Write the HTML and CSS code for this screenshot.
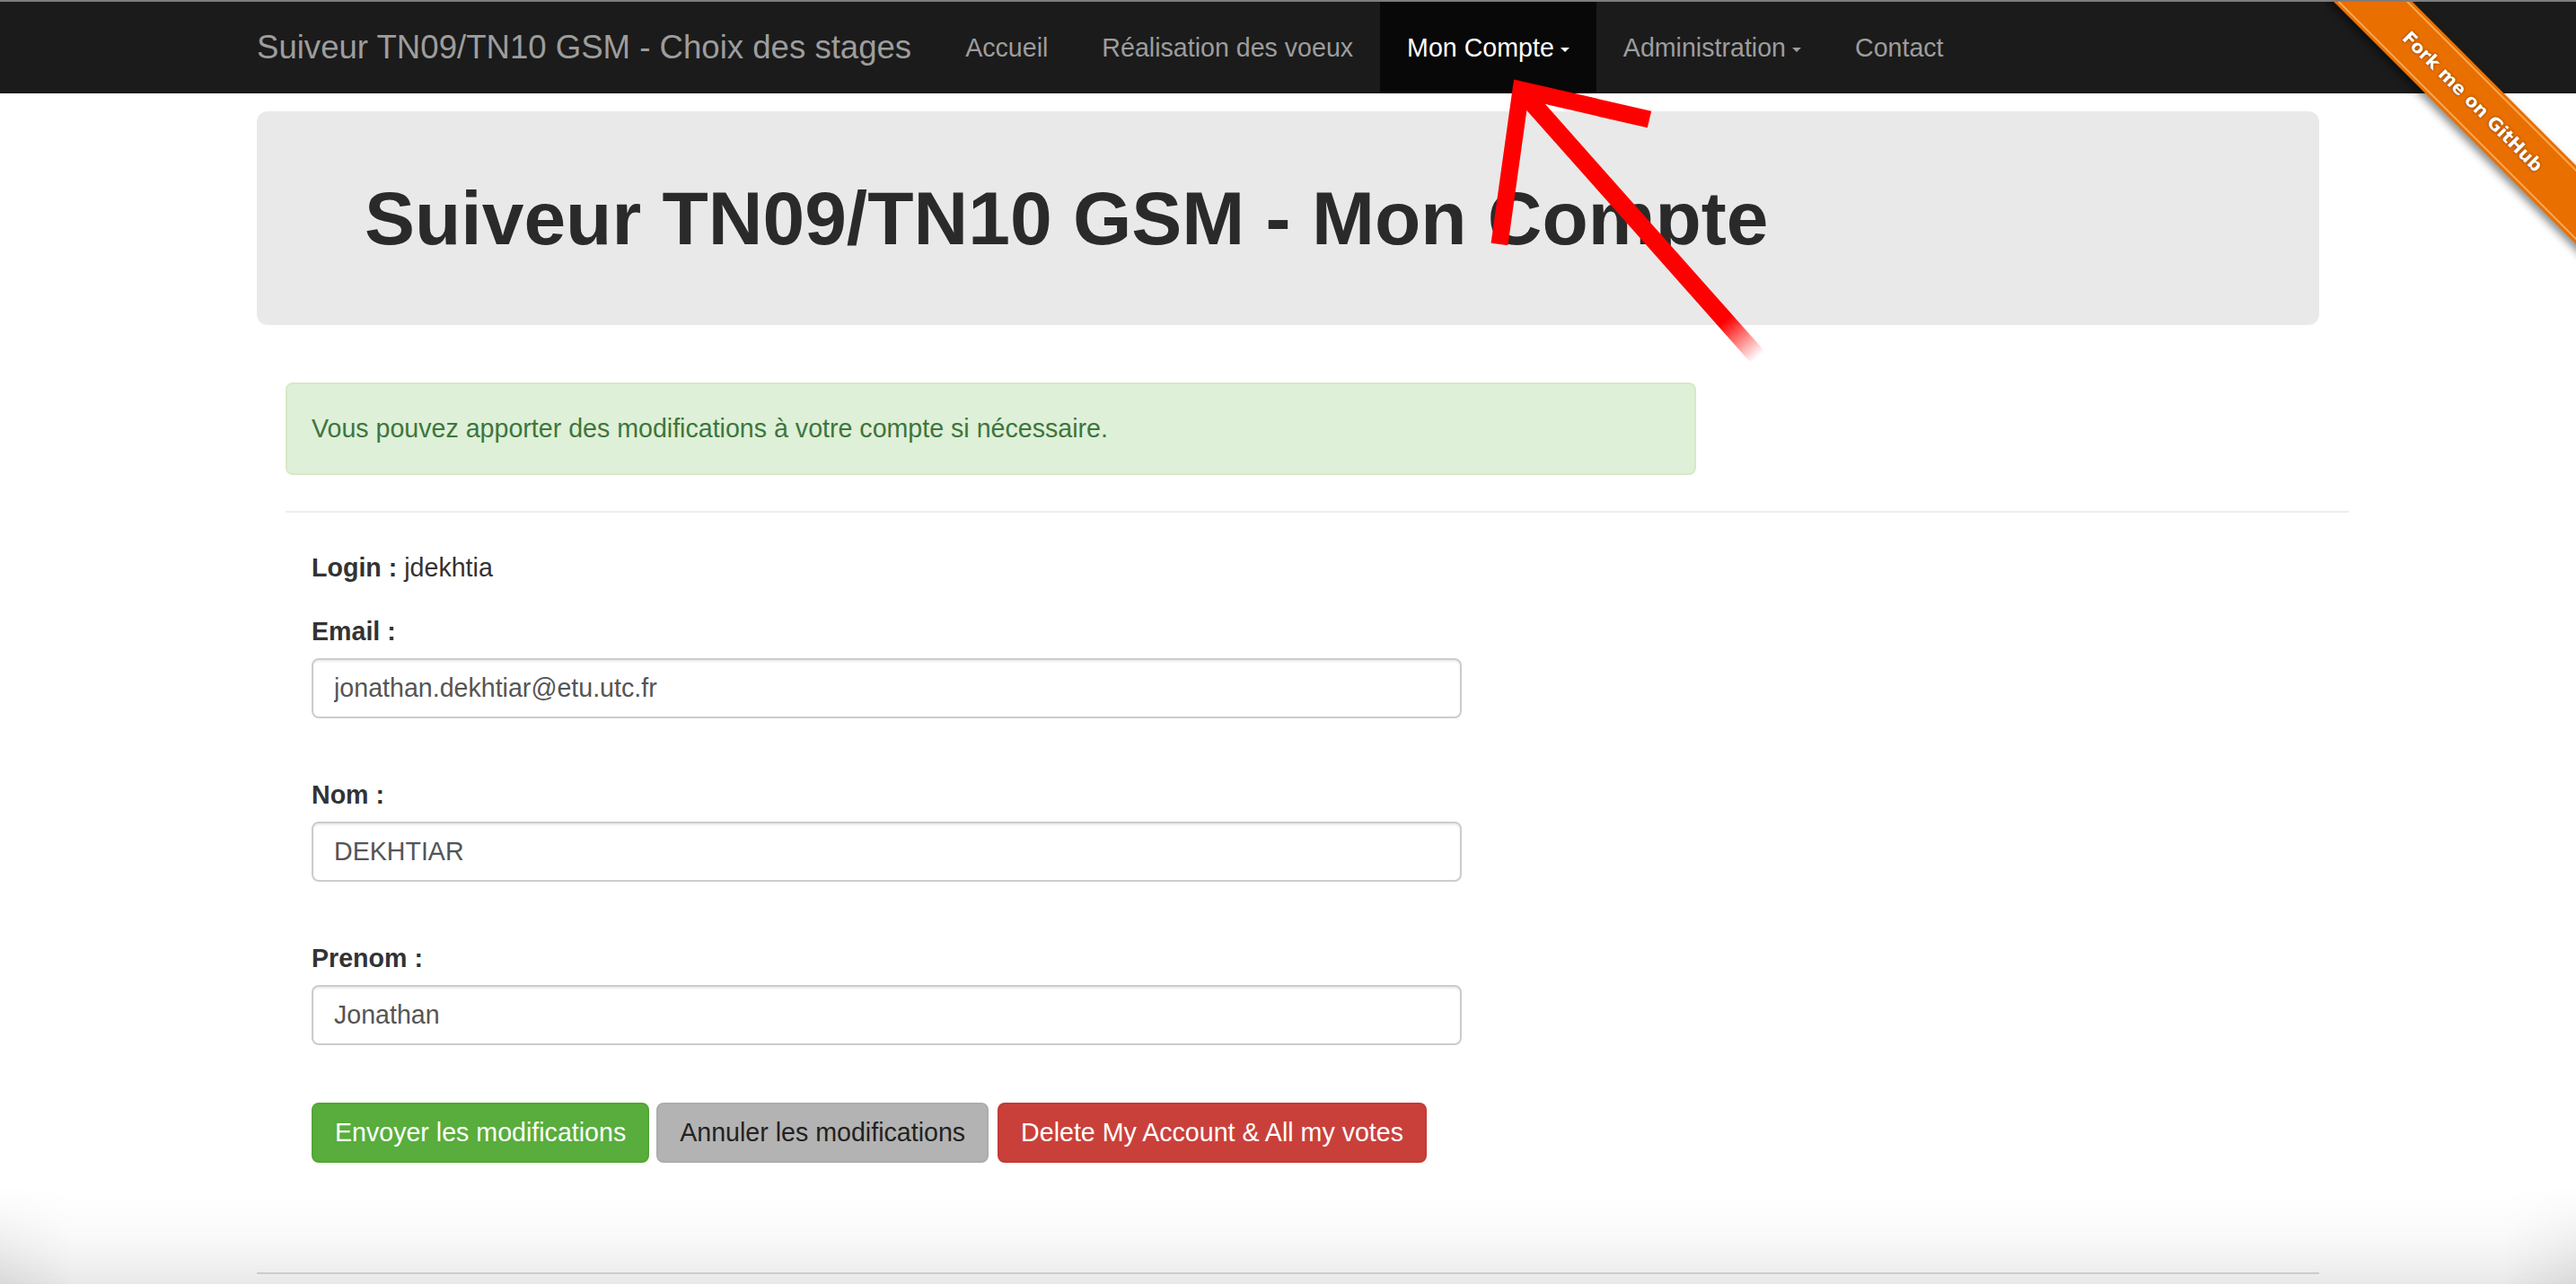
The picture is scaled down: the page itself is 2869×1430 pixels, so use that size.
FILE: index.html
```html
<!DOCTYPE html>
<html lang="fr">
<head>
<meta charset="utf-8">
<title>Suiveur TN09/TN10 GSM - Mon Compte</title>
<link rel="stylesheet" href="styles.css">
</head>
<body>
<nav class="navbar">
  <div class="nav-inner">
    <a class="brand">Suiveur TN09/TN10 GSM - Choix des stages</a>
    <ul class="nav">
      <li><a>Accueil</a></li>
      <li><a>Réalisation des voeux</a></li>
      <li class="active"><a>Mon Compte<span class="caret"></span></a></li>
      <li><a>Administration<span class="caret"></span></a></li>
      <li><a>Contact</a></li>
    </ul>
  </div>
</nav>

<div class="container">
  <div class="jumbotron">
    <h1>Suiveur TN09/TN10 GSM - Mon Compte</h1>
  </div>

  <div class="content">
    <div class="alert">Vous pouvez apporter des modifications à votre compte si nécessaire.</div>
    <hr class="sep">
    <form class="account-form">
      <p class="login"><strong>Login :</strong> jdekhtia</p>
      <div class="field first">
        <label>Email :</label>
        <input type="text" value="jonathan.dekhtiar@etu.utc.fr">
      </div>
      <div class="field">
        <label>Nom :</label>
        <input type="text" value="DEKHTIAR">
      </div>
      <div class="field">
        <label>Prenom :</label>
        <input type="text" value="Jonathan">
      </div>
      <div class="actions">
        <button type="button" class="btn btn-success">Envoyer les modifications</button>
        <button type="button" class="btn btn-default">Annuler les modifications</button>
        <button type="button" class="btn btn-danger">Delete My Account &amp; All my votes</button>
      </div>
    </form>
  </div>

  <hr class="footer-sep">
</div>

<div class="ribbon-wrap"><a class="ribbon">Fork me on GitHub</a></div>

<svg class="arrow" width="2869" height="1430" viewBox="0 0 2869 1430" xmlns="http://www.w3.org/2000/svg">
  <defs>
    <linearGradient id="fade" gradientUnits="userSpaceOnUse" x1="1697" y1="104" x2="1958" y2="398">
      <stop offset="0" stop-color="#ff0000"/>
      <stop offset="0.86" stop-color="#ff0000"/>
      <stop offset="1" stop-color="#ff0000" stop-opacity="0"/>
    </linearGradient>
  </defs>
  <line x1="1697" y1="104" x2="1958" y2="398" stroke="url(#fade)" stroke-width="20"/>
  <polyline points="1670,272 1694,100 1837,133" fill="none" stroke="#ff0000" stroke-width="19" stroke-linejoin="miter" stroke-miterlimit="6"/>
</svg>

<div class="vignette"></div>
</body>
</html>
```

FILE: styles.css
```css
* {
  box-sizing: border-box;
}

html, body {
  margin: 0;
  padding: 0;
  overflow: hidden;
  background: #ffffff;
}

body {
  font-family: "Liberation Sans", Arial, Helvetica, sans-serif;
  font-size: 28.6px;
  line-height: 40px;
  color: #333333;
  height: 1430px;
  position: relative;
}

/* ---------- Navbar ---------- */
.navbar {
  background: #1b1b1b;
  border-top: 2px solid #7d7d7d;
  height: 104px;
}

.nav-inner {
  width: 2297px;
  margin: 0 auto;
  height: 102px;
  display: flex;
  align-items: stretch;
}

.brand {
  display: flex;
  align-items: center;
  font-size: 36.6px;
  color: #9d9d9d;
  padding-right: 30px;
  white-space: nowrap;
}

.nav {
  list-style: none;
  margin: 0;
  padding: 0;
  display: flex;
  align-items: stretch;
}

.nav li {
  display: flex;
}

.nav a {
  display: flex;
  align-items: center;
  padding: 0 30px;
  color: #9d9d9d;
  font-size: 28.6px;
  white-space: nowrap;
}

.nav li.active {
  background: #080808;
}

.nav li.active a {
  color: #ffffff;
}

.caret {
  display: inline-block;
  width: 0;
  height: 0;
  margin-left: 7px;
  margin-top: 4px;
  border-top: 5px solid currentColor;
  border-left: 5px solid transparent;
  border-right: 5px solid transparent;
}

/* ---------- Container ---------- */
.container {
  width: 2297px;
  margin: 0 auto;
}

.jumbotron {
  margin-top: 20px;
  height: 238px;
  background: #e9e9e9;
  border-radius: 12px;
  padding-left: 120px;
  display: flex;
  align-items: center;
}

.jumbotron h1 {
  margin: 0;
  font-size: 84px;
  font-weight: bold;
  color: #2a2a2a;
  line-height: 1;
}

.content {
  margin-top: 64px;
  padding-left: 32px;
}

.alert {
  width: 1571px;
  background: #dff0d8;
  border: 2px solid #d6e9c6;
  border-radius: 8px;
  color: #3c763d;
  padding: 29px 27px;
  line-height: 41px;
  margin-bottom: 40px;
}

.sep {
  margin: 0;
  border: 0;
  border-top: 2px solid #eeeeee;
  width: 2298px;
}

.account-form {
  padding-left: 29px;
  margin: 0;
}

.login {
  margin: 41px 0 0;
  line-height: 40px;
}

.login strong,
.field label {
  font-weight: bold;
  color: #333333;
}

.field {
  margin-top: 65px;
}

.field.first {
  margin-top: 31px;
}

.field label {
  display: block;
  line-height: 40px;
  margin-bottom: 10px;
}

.field input {
  display: block;
  width: 1281px;
  height: 67px;
  border: 2px solid #cccccc;
  border-radius: 8px;
  padding: 0 23px;
  font-family: "Liberation Sans", Arial, Helvetica, sans-serif;
  font-size: 28.6px;
  color: #555555;
  background: #ffffff;
  box-shadow: inset 0 2px 2px rgba(0, 0, 0, 0.075);
  outline: none;
}

.actions {
  margin-top: 64px;
  display: flex;
  gap: 8px;
}

.btn {
  height: 67px;
  padding: 0 24px;
  border: 2px solid transparent;
  border-radius: 8px;
  font-family: "Liberation Sans", Arial, Helvetica, sans-serif;
  font-size: 28.6px;
  line-height: 1;
  cursor: pointer;
  white-space: nowrap;
}

.btn-success {
  background: #58ad3c;
  border-color: #52a636;
  color: #ffffff;
}

.btn-default {
  background: #b3b3b3;
  border-color: #acacac;
  color: #222222;
}

.btn-danger {
  background: #c9403b;
  border-color: #c23a35;
  color: #ffffff;
  margin-left: 2px;
}

.footer-sep {
  margin: 122px 0 0;
  border: 0;
  border-top: 2px solid #dddddd;
}

/* ---------- Ribbon ---------- */
.ribbon-wrap {
  position: absolute;
  top: 2px;
  right: 0;
  width: 280px;
  height: 290px;
  overflow: hidden;
  z-index: 10;
}

.ribbon {
  position: absolute;
  left: -45px;
  top: 80px;
  width: 420px;
  height: 62px;
  transform: rotate(45deg);
  background: #e96f00;
  color: #ffffff;
  font-family: "DejaVu Sans", sans-serif;
  font-weight: bold;
  font-size: 20px;
  line-height: 62px;
  text-align: center;
  text-shadow: 0 0 3px rgba(0, 0, 0, 0.55);
  box-shadow: 0 5px 10px rgba(0, 0, 0, 0.45);
}

.ribbon::before,
.ribbon::after {
  content: "";
  position: absolute;
  left: 0;
  right: 0;
  height: 2px;
  background: rgba(255, 190, 110, 0.75);
}

.ribbon::before {
  top: 3px;
}

.ribbon::after {
  bottom: 3px;
}

/* ---------- Arrow overlay ---------- */
.arrow {
  position: absolute;
  top: 0;
  left: 0;
  pointer-events: none;
  z-index: 20;
}

/* ---------- Bottom vignette ---------- */
.vignette {
  position: absolute;
  left: 0;
  right: 0;
  bottom: 0;
  height: 110px;
  pointer-events: none;
  z-index: 30;
  background:
    linear-gradient(to right, rgba(0, 0, 0, 0.07), rgba(0, 0, 0, 0) 80px),
    linear-gradient(to left, rgba(0, 0, 0, 0.07), rgba(0, 0, 0, 0) 80px),
    linear-gradient(to bottom, rgba(0, 0, 0, 0), rgba(0, 0, 0, 0.09));
  -webkit-mask-image: linear-gradient(to bottom, transparent, black);
  mask-image: linear-gradient(to bottom, transparent, black);
}
```
